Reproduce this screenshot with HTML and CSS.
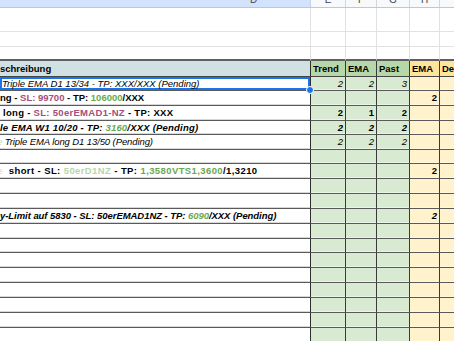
FILE: index.html
```html
<!DOCTYPE html>
<html>
<head>
<meta charset="utf-8">
<link rel="stylesheet" href="styles.css">
</head>
<body>
<div class="sheet">
  <div class="row colhead">
    <div class="c desc sel-head"><span class="letter d-letter">D</span></div>
    <div class="c"><span class="letter">E</span></div>
    <div class="c"><span class="letter">F</span></div>
    <div class="c"><span class="letter">G</span></div>
    <div class="c"><span class="letter">H</span></div>
    <div class="c"></div>
  </div>
  <div class="row blank h24"><div class="c desc"></div><div class="c"></div><div class="c"></div><div class="c"></div><div class="c"></div><div class="c"></div></div>
  <div class="row blank h15"><div class="c desc"></div><div class="c"></div><div class="c"></div><div class="c"></div><div class="c"></div><div class="c"></div></div>
  <div class="row blank h14 last"><div class="c desc"></div><div class="c"></div><div class="c"></div><div class="c"></div><div class="c"></div><div class="c"></div></div>

  <div class="row data hdr h16">
    <div class="c desc b">schreibung</div>
    <div class="c g2 b">Trend</div>
    <div class="c g2 b">EMA</div>
    <div class="c g2 b">Past</div>
    <div class="c y2 b">EMA</div>
    <div class="c y2 b">De</div>
  </div>

  <div class="row data h14">
    <div class="c desc i pl2 selected">Triple EMA D1 13/34 - TP: XXX/XXX (Pending)<span class="handle"></span></div>
    <div class="c g num i">2</div>
    <div class="c g num i">2</div>
    <div class="c g num i">3</div>
    <div class="c y"></div>
    <div class="c y"></div>
  </div>
  <div class="row data h15">
    <div class="c desc b">ng - <span class="mag">SL: 99700</span> - TP: <span class="grn">106000</span>/XXX</div>
    <div class="c g"></div><div class="c g"></div><div class="c g"></div>
    <div class="c y num b">2</div>
    <div class="c y"></div>
  </div>
  <div class="row data h15">
    <div class="c desc b pl3 ls-a">long - <span class="mag">SL: 50erEMAD1-NZ</span> - TP: XXX</div>
    <div class="c g num b">2</div><div class="c g num b">1</div><div class="c g num b">2</div>
    <div class="c y"></div><div class="c y"></div>
  </div>
  <div class="row data h14">
    <div class="c desc b i ls-b">le EMA W1 10/20 - TP: <span class="grn">3160</span>/XXX (Pending)</div>
    <div class="c g num b i">2</div><div class="c g num b i">2</div><div class="c g num b i">2</div>
    <div class="c y"></div><div class="c y"></div>
  </div>
  <div class="row data h15">
    <div class="c desc i ls-c"><span class="ghost">e</span> Triple EMA long D1 13/50 (Pending)</div>
    <div class="c g num i">2</div><div class="c g num i">2</div><div class="c g num i">2</div>
    <div class="c y"></div><div class="c y"></div>
  </div>
  <div class="row data h14">
    <div class="c desc"></div><div class="c g"></div><div class="c g"></div><div class="c g"></div><div class="c y"></div><div class="c y"></div>
  </div>
  <div class="row data h15">
    <div class="c desc b ls-d"><span class="ghost">e</span>  short - SL: <span class="lgrn">50erD1NZ</span> - TP: <span class="grn">1,3580VTS1,3600</span>/1,3210</div>
    <div class="c g"></div><div class="c g"></div><div class="c g"></div>
    <div class="c y num b">2</div>
    <div class="c y"></div>
  </div>
  <div class="row data h15">
    <div class="c desc"></div><div class="c g"></div><div class="c g"></div><div class="c g"></div><div class="c y"></div><div class="c y"></div>
  </div>
  <div class="row data h15">
    <div class="c desc"></div><div class="c g"></div><div class="c g"></div><div class="c g"></div><div class="c y"></div><div class="c y"></div>
  </div>
  <div class="row data h15">
    <div class="c desc b i ls-e">y-Limit auf 5830 - SL: 50erEMAD1NZ - TP: <span class="grn">6090</span>/XXX (Pending)</div>
    <div class="c g"></div><div class="c g"></div><div class="c g"></div>
    <div class="c y num b i">2</div>
    <div class="c y"></div>
  </div>
  <div class="row data h15"><div class="c desc"></div><div class="c g"></div><div class="c g"></div><div class="c g"></div><div class="c y"></div><div class="c y"></div></div>
  <div class="row data h14"><div class="c desc"></div><div class="c g"></div><div class="c g"></div><div class="c g"></div><div class="c y"></div><div class="c y"></div></div>
  <div class="row data h15"><div class="c desc"></div><div class="c g"></div><div class="c g"></div><div class="c g"></div><div class="c y"></div><div class="c y"></div></div>
  <div class="row data h15"><div class="c desc"></div><div class="c g"></div><div class="c g"></div><div class="c g"></div><div class="c y"></div><div class="c y"></div></div>
  <div class="row data h15"><div class="c desc"></div><div class="c g"></div><div class="c g"></div><div class="c g"></div><div class="c y"></div><div class="c y"></div></div>
  <div class="row data h15"><div class="c desc"></div><div class="c g"></div><div class="c g"></div><div class="c g"></div><div class="c y"></div><div class="c y"></div></div>
  <div class="row data h15"><div class="c desc"></div><div class="c g"></div><div class="c g"></div><div class="c g"></div><div class="c y"></div><div class="c y"></div></div>
  <div class="row data h15"><div class="c desc"></div><div class="c g"></div><div class="c g"></div><div class="c g"></div><div class="c y"></div><div class="c y"></div></div>
</div>
</body>
</html>
```

FILE: styles.css
```css
html, body {
  margin: 0;
  padding: 0;
  background: #ffffff;
  overflow: hidden;
}
.sheet {
  width: 454px;
  height: 341px;
  overflow: hidden;
  font-family: "Liberation Sans", Arial, sans-serif;
  font-size: 9.5px;
  color: #000;
}
.row {
  display: grid;
  grid-template-columns: 311px 35px 31px 33px 30px 30px;
  box-sizing: border-box;
}
.h24 { height: 24px; }
.h16 { height: 16px; }
.h16 .c { line-height: 15px; }
.h15 { height: 15px; }
.h15 .c { line-height: 14px; }
.h14 { height: 14px; }
.h14 .c { line-height: 13px; }
.c {
  box-sizing: border-box;
  white-space: pre;
  overflow: visible;
  display: block;
  min-width: 0;
}
.colhead {
  height: 8px;
  background: #f8f9fa;
  border-bottom: 1px solid #c4c7c5;
  overflow: hidden;
}
.colhead .c {
  border-right: 1px solid #d6d6d6;
  text-align: center;
  overflow: hidden;
}
.colhead .sel-head {
  background: #d3e3fd;
  border-right-color: #c4d3ea;
  text-align: left;
  padding-left: 250px;
}
.letter {
  display: block;
  font-size: 10px;
  color: #444;
  line-height: 10px;
  margin-top: -5px;
}
.blank .c {
  border-right: 1px solid #e2e2e2;
  border-bottom: 1px solid #e2e2e2;
}
.blank.last .c { border-bottom: 2px solid #5f5f5f; }

.data .c {
  border-bottom: 1px solid #5a5a5a;
  border-right: 1px solid #3a3a3a;
  box-shadow: inset 0 -1px 0 #c9c9c9;
}
.data .desc {
  border-right: 1px solid #2f2f2f;
  box-shadow: inset 0 -1px 0 #d8d8d8;
}
.hdr .c { border-bottom: 1px solid #444; box-shadow: none; padding-left: 2px; }
.hdr .desc { background: #d0e0e3; padding-left: 0; }
.g2 { background: #b6d7a8; }
.y2 { background: #ffe599; }
.g { background: #d9ead3; }
.y { background: #fff2cc; }
.data .g, .data .y { box-shadow: inset 0 -1px 0 rgba(255,255,255,0.45); }
.num { text-align: right; padding-right: 2px; }
.b { font-weight: bold; }
.i { font-style: italic; }
.pl2 { padding-left: 2px; }
.pl3 { padding-left: 3px; }
.ls-a { letter-spacing: 0.3px; }
.ls-b { letter-spacing: 0.2px; }
.ls-c { letter-spacing: -0.1px; }
.ls-d { letter-spacing: 0.4px; }
.ls-e { letter-spacing: -0.05px; }
.mag { color: #a64d79; }
.grn { color: #6aa84f; }
.lgrn { color: #b6d7a8; }
.ghost { color: #c8d8c0; margin-left: -3px; font-weight: normal; }
.selected {
  position: relative;
  box-shadow: inset 0 0 0 2px #1a73e8 !important;
}
.handle {
  position: absolute;
  right: -4px;
  bottom: -4px;
  width: 6px;
  height: 6px;
  border-radius: 50%;
  background: #1a73e8;
  border: 1px solid #fff;
  z-index: 2;
}
```
